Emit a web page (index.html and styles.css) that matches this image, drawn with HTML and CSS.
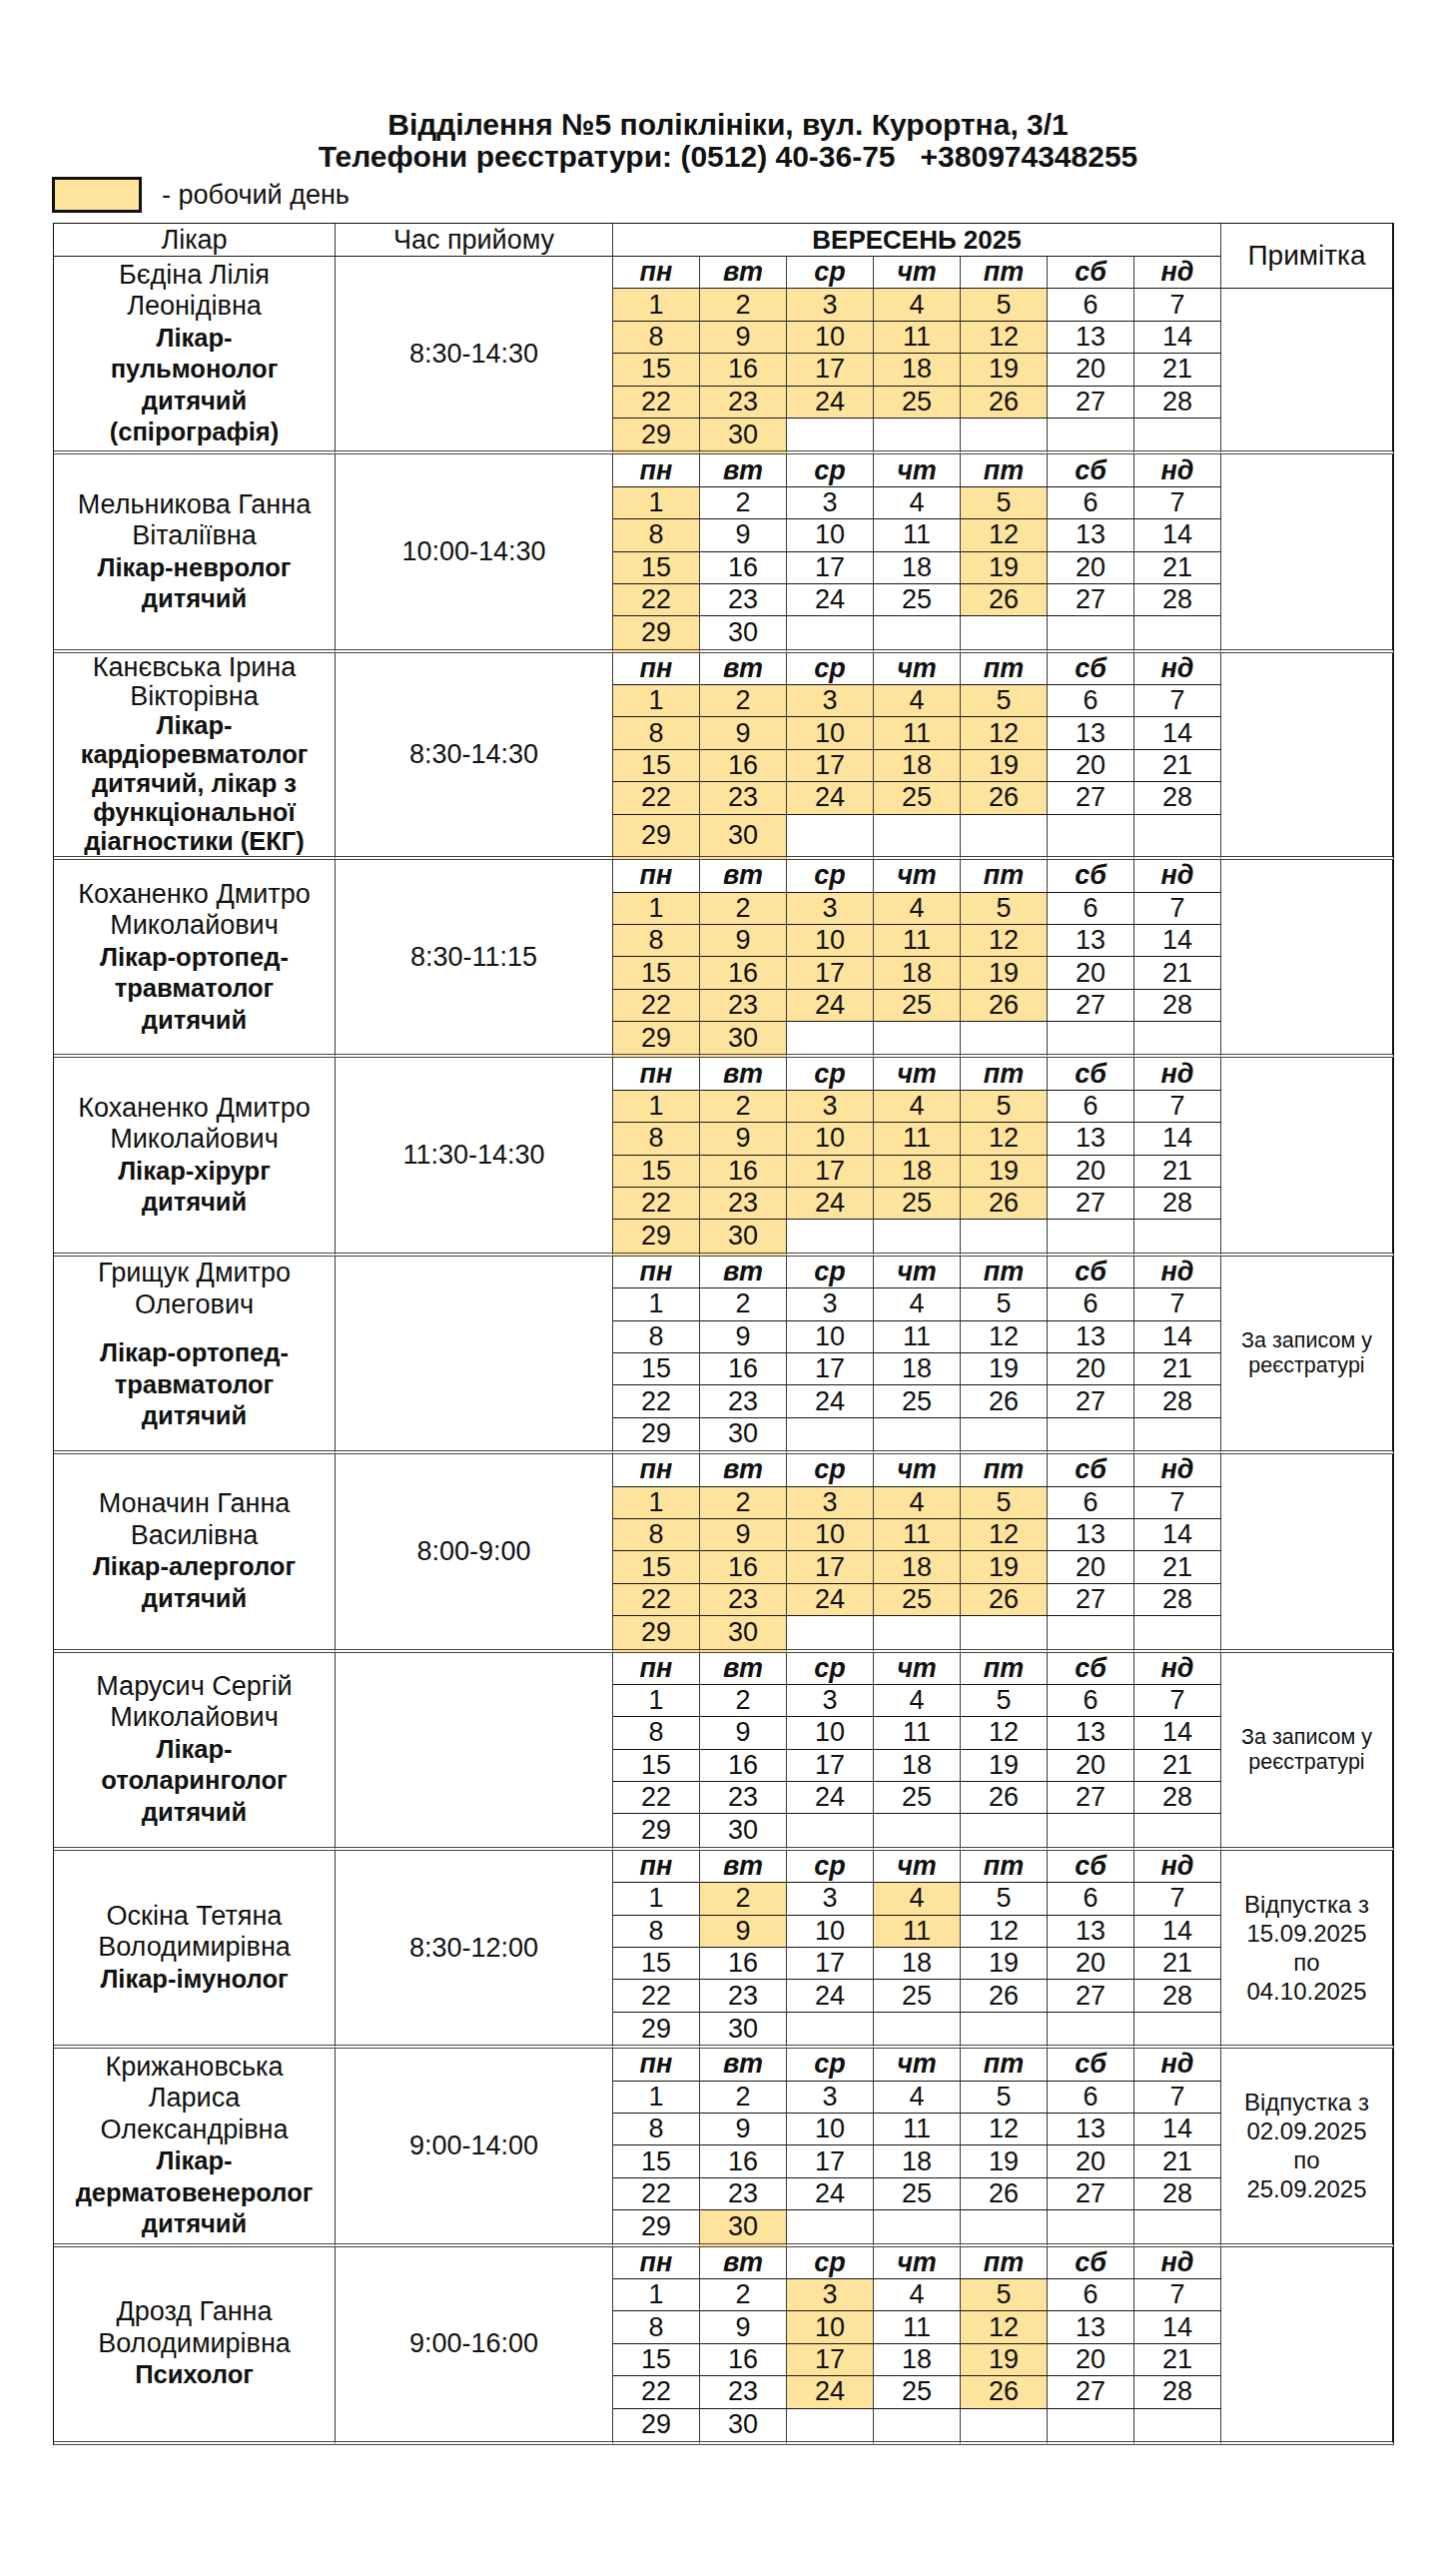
FILE: index.html
```html
<!DOCTYPE html>
<html lang="uk">
<head>
<meta charset="utf-8">
<title>Відділення №5</title>
<link rel="stylesheet" href="styles.css">
</head>
<body>
<div class="title">
  <div>Відділення №5 поліклініки, вул. Курортна, 3/1</div>
  <div class="phones">Телефони реєстратури: (0512) 40-36-75   +380974348255</div>
</div>
<div class="legend"><div class="swatch"></div><div class="legend-text">- робочий день</div></div>

<div class="sheet">
  <div class="hd">Лікар</div>
  <div class="hd">Час прийому</div>
  <div class="hd month">ВЕРЕСЕНЬ 2025</div>
  <div class="note-hd">Примітка</div>

  <!-- 1 -->
  <div class="doc"><div>Бєдіна Лілія<br>Леонідівна<br><b>Лікар-<br>пульмонолог<br>дитячий<br>(спірографія)</b></div></div>
  <div class="time">8:30-14:30</div>
  <div class="dn">пн</div><div class="dn">вт</div><div class="dn">ср</div><div class="dn">чт</div><div class="dn">пт</div><div class="dn">сб</div><div class="dn">нд</div>
  <div class="d y">1</div><div class="d y">2</div><div class="d y">3</div><div class="d y">4</div><div class="d y">5</div><div class="d">6</div><div class="d">7</div>
  <div class="note n5"></div>
  <div class="d y">8</div><div class="d y">9</div><div class="d y">10</div><div class="d y">11</div><div class="d y">12</div><div class="d">13</div><div class="d">14</div>
  <div class="d y">15</div><div class="d y">16</div><div class="d y">17</div><div class="d y">18</div><div class="d y">19</div><div class="d">20</div><div class="d">21</div>
  <div class="d y">22</div><div class="d y">23</div><div class="d y">24</div><div class="d y">25</div><div class="d y">26</div><div class="d">27</div><div class="d">28</div>
  <div class="d y e">29</div><div class="d y e">30</div><div class="d e"></div><div class="d e"></div><div class="d e"></div><div class="d e"></div><div class="d e"></div>

  <!-- 2 -->
  <div class="doc"><div>Мельникова Ганна<br>Віталіївна<br><b>Лікар-невролог<br>дитячий</b></div></div>
  <div class="time">10:00-14:30</div>
  <div class="dn">пн</div><div class="dn">вт</div><div class="dn">ср</div><div class="dn">чт</div><div class="dn">пт</div><div class="dn">сб</div><div class="dn">нд</div>
  <div class="note"></div>
  <div class="d y">1</div><div class="d">2</div><div class="d">3</div><div class="d">4</div><div class="d y">5</div><div class="d">6</div><div class="d">7</div>
  <div class="d y">8</div><div class="d">9</div><div class="d">10</div><div class="d">11</div><div class="d y">12</div><div class="d">13</div><div class="d">14</div>
  <div class="d y">15</div><div class="d">16</div><div class="d">17</div><div class="d">18</div><div class="d y">19</div><div class="d">20</div><div class="d">21</div>
  <div class="d y">22</div><div class="d">23</div><div class="d">24</div><div class="d">25</div><div class="d y">26</div><div class="d">27</div><div class="d">28</div>
  <div class="d y e">29</div><div class="d e">30</div><div class="d e"></div><div class="d e"></div><div class="d e"></div><div class="d e"></div><div class="d e"></div>

  <!-- 3 -->
  <div class="doc tight"><div>Канєвська Ірина<br>Вікторівна<br><b>Лікар-<br>кардіоревматолог<br>дитячий, лікар з<br>функціональної<br>діагностики (ЕКГ)</b></div></div>
  <div class="time">8:30-14:30</div>
  <div class="dn">пн</div><div class="dn">вт</div><div class="dn">ср</div><div class="dn">чт</div><div class="dn">пт</div><div class="dn">сб</div><div class="dn">нд</div>
  <div class="note"></div>
  <div class="d y">1</div><div class="d y">2</div><div class="d y">3</div><div class="d y">4</div><div class="d y">5</div><div class="d">6</div><div class="d">7</div>
  <div class="d y">8</div><div class="d y">9</div><div class="d y">10</div><div class="d y">11</div><div class="d y">12</div><div class="d">13</div><div class="d">14</div>
  <div class="d y">15</div><div class="d y">16</div><div class="d y">17</div><div class="d y">18</div><div class="d y">19</div><div class="d">20</div><div class="d">21</div>
  <div class="d y">22</div><div class="d y">23</div><div class="d y">24</div><div class="d y">25</div><div class="d y">26</div><div class="d">27</div><div class="d">28</div>
  <div class="d y e tall">29</div><div class="d y e tall">30</div><div class="d e tall"></div><div class="d e tall"></div><div class="d e tall"></div><div class="d e tall"></div><div class="d e tall"></div>

  <!-- 4 -->
  <div class="doc"><div>Коханенко Дмитро<br>Миколайович<br><b>Лікар-ортопед-<br>травматолог<br>дитячий</b></div></div>
  <div class="time">8:30-11:15</div>
  <div class="dn">пн</div><div class="dn">вт</div><div class="dn">ср</div><div class="dn">чт</div><div class="dn">пт</div><div class="dn">сб</div><div class="dn">нд</div>
  <div class="note"></div>
  <div class="d y">1</div><div class="d y">2</div><div class="d y">3</div><div class="d y">4</div><div class="d y">5</div><div class="d">6</div><div class="d">7</div>
  <div class="d y">8</div><div class="d y">9</div><div class="d y">10</div><div class="d y">11</div><div class="d y">12</div><div class="d">13</div><div class="d">14</div>
  <div class="d y">15</div><div class="d y">16</div><div class="d y">17</div><div class="d y">18</div><div class="d y">19</div><div class="d">20</div><div class="d">21</div>
  <div class="d y">22</div><div class="d y">23</div><div class="d y">24</div><div class="d y">25</div><div class="d y">26</div><div class="d">27</div><div class="d">28</div>
  <div class="d y e">29</div><div class="d y e">30</div><div class="d e"></div><div class="d e"></div><div class="d e"></div><div class="d e"></div><div class="d e"></div>

  <!-- 5 -->
  <div class="doc"><div>Коханенко Дмитро<br>Миколайович<br><b>Лікар-хірург<br>дитячий</b></div></div>
  <div class="time">11:30-14:30</div>
  <div class="dn">пн</div><div class="dn">вт</div><div class="dn">ср</div><div class="dn">чт</div><div class="dn">пт</div><div class="dn">сб</div><div class="dn">нд</div>
  <div class="note"></div>
  <div class="d y">1</div><div class="d y">2</div><div class="d y">3</div><div class="d y">4</div><div class="d y">5</div><div class="d">6</div><div class="d">7</div>
  <div class="d y">8</div><div class="d y">9</div><div class="d y">10</div><div class="d y">11</div><div class="d y">12</div><div class="d">13</div><div class="d">14</div>
  <div class="d y">15</div><div class="d y">16</div><div class="d y">17</div><div class="d y">18</div><div class="d y">19</div><div class="d">20</div><div class="d">21</div>
  <div class="d y">22</div><div class="d y">23</div><div class="d y">24</div><div class="d y">25</div><div class="d y">26</div><div class="d">27</div><div class="d">28</div>
  <div class="d y e">29</div><div class="d y e">30</div><div class="d e"></div><div class="d e"></div><div class="d e"></div><div class="d e"></div><div class="d e"></div>

  <!-- 6 -->
  <div class="doc raised"><div><span class="nm">Грищук Дмитро<br>Олегович</span><b>Лікар-ортопед-<br>травматолог<br>дитячий</b></div></div>
  <div class="time"></div>
  <div class="dn">пн</div><div class="dn">вт</div><div class="dn">ср</div><div class="dn">чт</div><div class="dn">пт</div><div class="dn">сб</div><div class="dn">нд</div>
  <div class="note">За записом у<br>реєстратурі</div>
  <div class="d">1</div><div class="d">2</div><div class="d">3</div><div class="d">4</div><div class="d">5</div><div class="d">6</div><div class="d">7</div>
  <div class="d">8</div><div class="d">9</div><div class="d">10</div><div class="d">11</div><div class="d">12</div><div class="d">13</div><div class="d">14</div>
  <div class="d">15</div><div class="d">16</div><div class="d">17</div><div class="d">18</div><div class="d">19</div><div class="d">20</div><div class="d">21</div>
  <div class="d">22</div><div class="d">23</div><div class="d">24</div><div class="d">25</div><div class="d">26</div><div class="d">27</div><div class="d">28</div>
  <div class="d e">29</div><div class="d e">30</div><div class="d e"></div><div class="d e"></div><div class="d e"></div><div class="d e"></div><div class="d e"></div>

  <!-- 7 -->
  <div class="doc"><div>Моначин Ганна<br>Василівна<br><b>Лікар-алерголог<br>дитячий</b></div></div>
  <div class="time">8:00-9:00</div>
  <div class="dn">пн</div><div class="dn">вт</div><div class="dn">ср</div><div class="dn">чт</div><div class="dn">пт</div><div class="dn">сб</div><div class="dn">нд</div>
  <div class="note"></div>
  <div class="d y">1</div><div class="d y">2</div><div class="d y">3</div><div class="d y">4</div><div class="d y">5</div><div class="d">6</div><div class="d">7</div>
  <div class="d y">8</div><div class="d y">9</div><div class="d y">10</div><div class="d y">11</div><div class="d y">12</div><div class="d">13</div><div class="d">14</div>
  <div class="d y">15</div><div class="d y">16</div><div class="d y">17</div><div class="d y">18</div><div class="d y">19</div><div class="d">20</div><div class="d">21</div>
  <div class="d y">22</div><div class="d y">23</div><div class="d y">24</div><div class="d y">25</div><div class="d y">26</div><div class="d">27</div><div class="d">28</div>
  <div class="d y e">29</div><div class="d y e">30</div><div class="d e"></div><div class="d e"></div><div class="d e"></div><div class="d e"></div><div class="d e"></div>

  <!-- 8 -->
  <div class="doc"><div>Марусич Сергій<br>Миколайович<br><b>Лікар-<br>отоларинголог<br>дитячий</b></div></div>
  <div class="time"></div>
  <div class="dn">пн</div><div class="dn">вт</div><div class="dn">ср</div><div class="dn">чт</div><div class="dn">пт</div><div class="dn">сб</div><div class="dn">нд</div>
  <div class="note">За записом у<br>реєстратурі</div>
  <div class="d">1</div><div class="d">2</div><div class="d">3</div><div class="d">4</div><div class="d">5</div><div class="d">6</div><div class="d">7</div>
  <div class="d">8</div><div class="d">9</div><div class="d">10</div><div class="d">11</div><div class="d">12</div><div class="d">13</div><div class="d">14</div>
  <div class="d">15</div><div class="d">16</div><div class="d">17</div><div class="d">18</div><div class="d">19</div><div class="d">20</div><div class="d">21</div>
  <div class="d">22</div><div class="d">23</div><div class="d">24</div><div class="d">25</div><div class="d">26</div><div class="d">27</div><div class="d">28</div>
  <div class="d e">29</div><div class="d e">30</div><div class="d e"></div><div class="d e"></div><div class="d e"></div><div class="d e"></div><div class="d e"></div>

  <!-- 9 -->
  <div class="doc"><div>Оскіна Тетяна<br>Володимирівна<br><b>Лікар-імунолог</b></div></div>
  <div class="time">8:30-12:00</div>
  <div class="dn">пн</div><div class="dn">вт</div><div class="dn">ср</div><div class="dn">чт</div><div class="dn">пт</div><div class="dn">сб</div><div class="dn">нд</div>
  <div class="note vac">Відпустка з<br>15.09.2025<br>по<br>04.10.2025</div>
  <div class="d">1</div><div class="d y">2</div><div class="d">3</div><div class="d y">4</div><div class="d">5</div><div class="d">6</div><div class="d">7</div>
  <div class="d">8</div><div class="d y">9</div><div class="d">10</div><div class="d y">11</div><div class="d">12</div><div class="d">13</div><div class="d">14</div>
  <div class="d">15</div><div class="d">16</div><div class="d">17</div><div class="d">18</div><div class="d">19</div><div class="d">20</div><div class="d">21</div>
  <div class="d">22</div><div class="d">23</div><div class="d">24</div><div class="d">25</div><div class="d">26</div><div class="d">27</div><div class="d">28</div>
  <div class="d e">29</div><div class="d e">30</div><div class="d e"></div><div class="d e"></div><div class="d e"></div><div class="d e"></div><div class="d e"></div>

  <!-- 10 -->
  <div class="doc"><div>Крижановська<br>Лариса<br>Олександрівна<br><b>Лікар-<br>дерматовенеролог<br>дитячий</b></div></div>
  <div class="time">9:00-14:00</div>
  <div class="dn">пн</div><div class="dn">вт</div><div class="dn">ср</div><div class="dn">чт</div><div class="dn">пт</div><div class="dn">сб</div><div class="dn">нд</div>
  <div class="note vac">Відпустка з<br>02.09.2025<br>по<br>25.09.2025</div>
  <div class="d">1</div><div class="d">2</div><div class="d">3</div><div class="d">4</div><div class="d">5</div><div class="d">6</div><div class="d">7</div>
  <div class="d">8</div><div class="d">9</div><div class="d">10</div><div class="d">11</div><div class="d">12</div><div class="d">13</div><div class="d">14</div>
  <div class="d">15</div><div class="d">16</div><div class="d">17</div><div class="d">18</div><div class="d">19</div><div class="d">20</div><div class="d">21</div>
  <div class="d">22</div><div class="d">23</div><div class="d">24</div><div class="d">25</div><div class="d">26</div><div class="d">27</div><div class="d">28</div>
  <div class="d e">29</div><div class="d y e">30</div><div class="d e"></div><div class="d e"></div><div class="d e"></div><div class="d e"></div><div class="d e"></div>

  <!-- 11 -->
  <div class="doc"><div>Дрозд Ганна<br>Володимирівна<br><b>Психолог</b></div></div>
  <div class="time">9:00-16:00</div>
  <div class="dn">пн</div><div class="dn">вт</div><div class="dn">ср</div><div class="dn">чт</div><div class="dn">пт</div><div class="dn">сб</div><div class="dn">нд</div>
  <div class="note"></div>
  <div class="d">1</div><div class="d">2</div><div class="d y">3</div><div class="d">4</div><div class="d y">5</div><div class="d">6</div><div class="d">7</div>
  <div class="d">8</div><div class="d">9</div><div class="d y">10</div><div class="d">11</div><div class="d y">12</div><div class="d">13</div><div class="d">14</div>
  <div class="d">15</div><div class="d">16</div><div class="d y">17</div><div class="d">18</div><div class="d y">19</div><div class="d">20</div><div class="d">21</div>
  <div class="d">22</div><div class="d">23</div><div class="d y">24</div><div class="d">25</div><div class="d y">26</div><div class="d">27</div><div class="d">28</div>
  <div class="d e">29</div><div class="d e">30</div><div class="d e"></div><div class="d e"></div><div class="d e"></div><div class="d e"></div><div class="d e"></div>
</div>
</body>
</html>
```

FILE: styles.css
```css
html, body {
  margin: 0;
  background: #fff;
}
body {
  font-family: "Liberation Sans", Arial, sans-serif;
  color: #111;
  width: 1458px;
}
.title {
  margin-top: 109px;
  text-align: center;
  font-weight: bold;
  font-size: 30px;
  line-height: 32px;
}
.phones {
  white-space: pre;
}
.legend {
  display: flex;
  align-items: center;
  margin: 4px 0 0 52px;
  height: 36px;
}
.swatch {
  width: 90px;
  height: 36px;
  box-sizing: border-box;
  border: 3px solid #111;
  background: #fde39c;
}
.legend-text {
  margin-left: 20px;
  font-size: 27px;
}
.sheet {
  display: grid;
  grid-template-columns: 282px 278px repeat(7, 87px) 173px;
  width: max-content;
  margin: 10px 0 0 53px;
  border-left: 1px solid #111;
  border-top: 1px solid #111;
}
.sheet > div {
  box-sizing: border-box;
  display: flex;
  align-items: center;
  justify-content: center;
  text-align: center;
  border-right: 1px solid #3a3a3a;
  border-bottom: 1px solid #151515;
  font-size: 27px;
}
.hd {
  height: 33px;
}
.month {
  grid-column: span 7;
  font-weight: bold;
  font-size: 26px !important;
}
.sheet > .note-hd {
  grid-row: span 2;
  border-right: 2px solid #111;
  align-items: flex-start;
  padding-top: 16px;
  font-size: 28px;
}
.sheet > .doc {
  grid-row: span 6;
  line-height: 31.5px;
  border-bottom: 4px double #4a4438;
}
.doc b {
  font-size: 25.5px;
}
.doc .nm {
  display: block;
}
.sheet > .doc.raised {
  padding-bottom: 17px;
}
.doc.raised .nm {
  margin-bottom: 17px;
}
.sheet > .doc.tight {
  line-height: 29px;
}
.sheet > .time {
  grid-row: span 6;
  border-bottom: 4px double #4a4438;
}
.sheet > .note {
  grid-row: span 6;
  border-right: 2px solid #111;
  border-bottom: 4px double #4a4438;
  font-size: 21.5px;
  line-height: 25px;
  padding: 0 6px;
}
.sheet > .note.n5 {
  grid-row: span 5;
}
.sheet > .note.vac {
  font-size: 24px;
  line-height: 29px;
}
.sheet > .dn {
  height: 32.4px;
  font-weight: bold;
  font-style: italic;
}
.sheet > .d {
  height: 32.4px;
}
.sheet > .d.y {
  background: #fde39c;
}
.sheet > .d.e {
  height: 36.4px;
  border-bottom: 4px double #4a4438;
}
.sheet > .d.e.tall {
  height: 45.5px;
}
```
